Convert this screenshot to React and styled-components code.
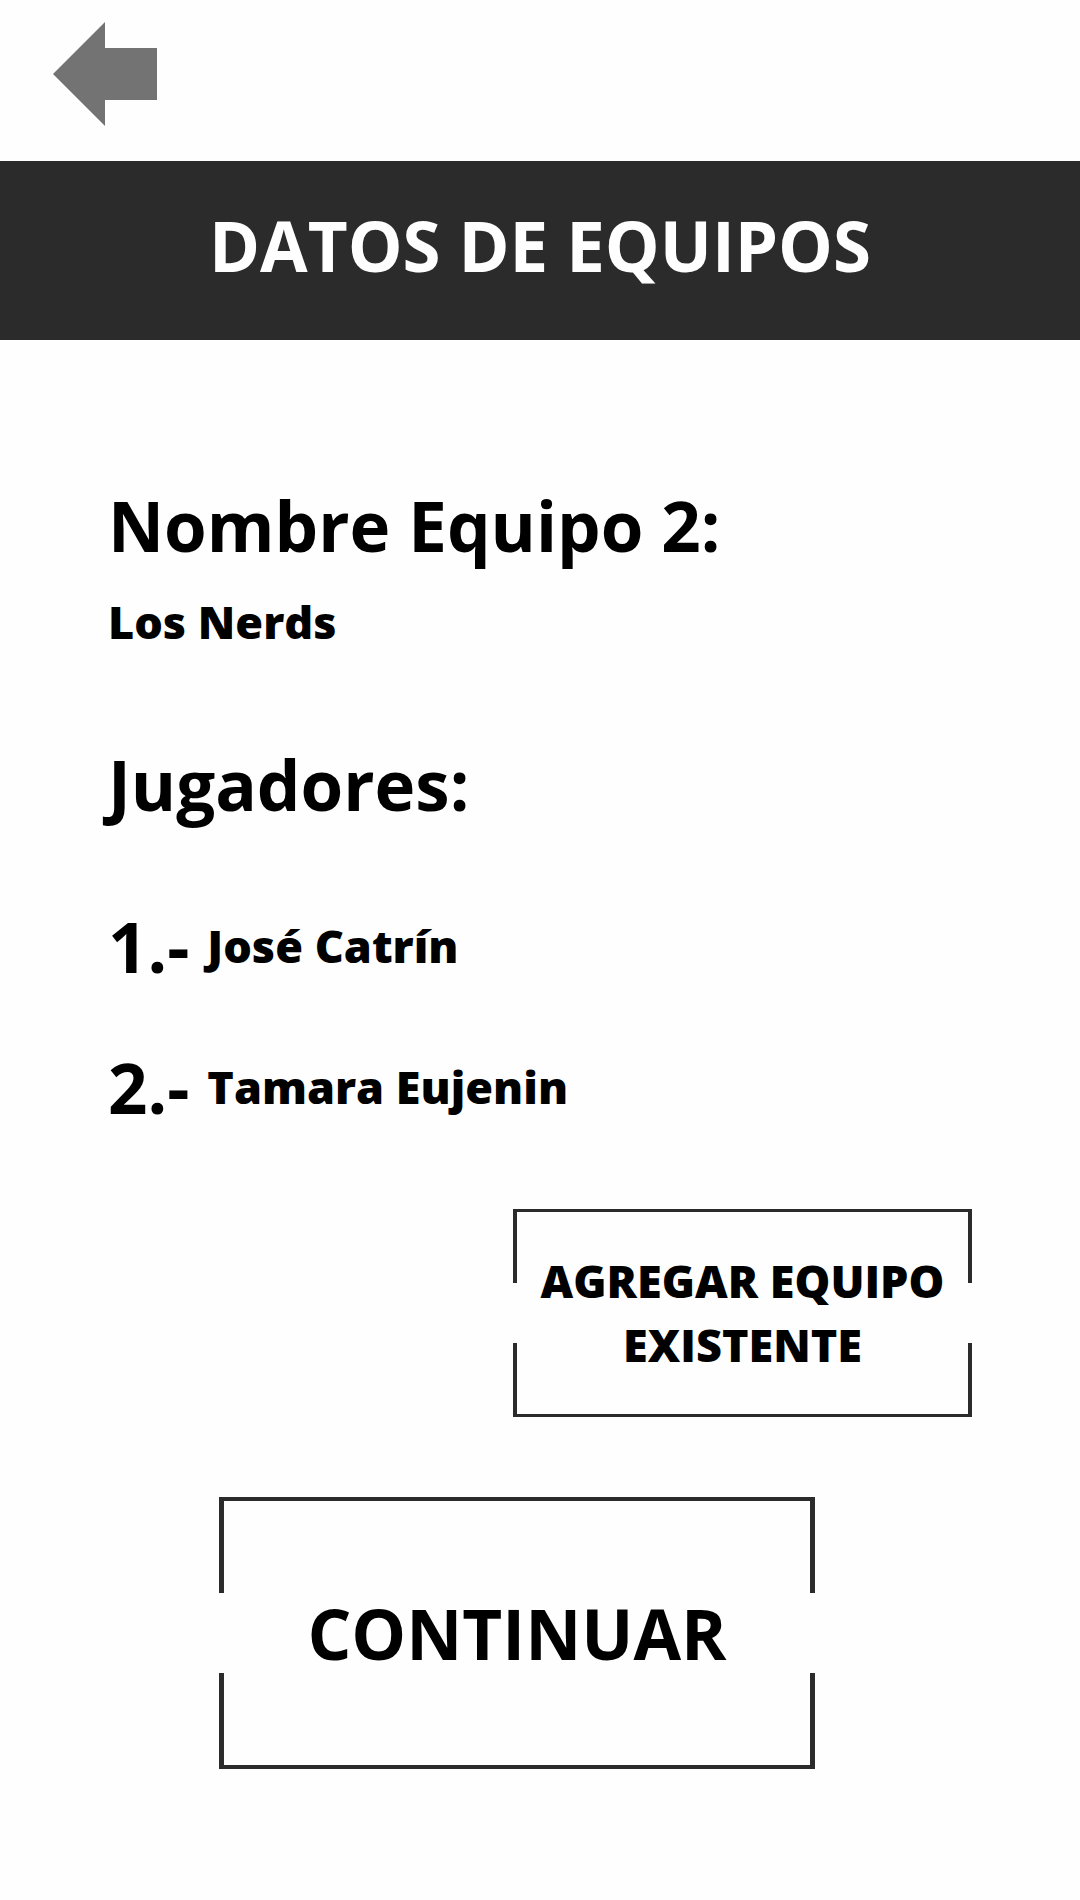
import React from "react";
import styled, { createGlobalStyle } from "styled-components";

const GlobalStyle = createGlobalStyle`
  *, *::before, *::after { box-sizing: border-box; }
  body {
    margin: 0;
    background: #fefefe;
    color: #000;
    font-family: "Open Sans", "Noto Sans", sans-serif;
  }
`;

const Page = styled.div`
  display: flex;
  flex-direction: column;
  min-height: 100vh;
`;

const TopBar = styled.nav`
  display: flex;
  padding: 22px 53px 35px;
`;

const BackButton = styled.button`
  display: block;
  padding: 0;
  border: 0;
  background: none;
  color: #737373;
  cursor: pointer;

  svg {
    display: block;
  }
`;

const Banner = styled.header`
  padding: 35px 32px 46px;
  background: #2b2b2b;
  color: #fefefe;
  text-align: center;
`;

const Title = styled.h1`
  margin: 0;
  font-size: 69px;
  line-height: 98px;
  font-weight: 700;
`;

const Content = styled.main`
  display: flex;
  flex-direction: column;
  padding: 136px 108px 64px;
`;

const Section = styled.section`
  margin-bottom: ${({ $gap }) => $gap}px;
`;

const Heading = styled.h2`
  margin: 0;
  font-size: 69px;
  line-height: 98px;
  font-weight: 700;
`;

const Value = styled.span`
  font-size: 45px;
  line-height: 64px;
  font-weight: 800;
`;

const TeamName = styled(Value).attrs({ as: "p" })`
  margin: 16px 0 0;
`;

const Players = styled.ol`
  display: flex;
  flex-direction: column;
  gap: 43px;
  margin: 64px 0 0;
  padding: 0;
  list-style: none;
`;

const Player = styled.li`
  display: flex;
  align-items: center;
  gap: 18px;
`;

const Position = styled.span`
  font-size: 69px;
  line-height: 98px;
  font-weight: 700;
`;

const BracketButton = styled.button`
  position: relative;
  border: 0;
  background: none;
  color: inherit;
  font-family: inherit;
  text-align: center;
  cursor: pointer;

  &::before,
  &::after {
    content: "";
    position: absolute;
    left: 0;
    right: 0;
    height: ${({ $arm }) => $arm}px;
    border: solid #2b2b2b;
  }

  &::before {
    top: 0;
    border-width: ${({ $line }) => `${$line}px ${$line + 1}px 0`};
  }

  &::after {
    bottom: 0;
    border-width: ${({ $line }) => `0 ${$line + 1}px ${$line}px`};
  }
`;

const AddTeamButton = styled(BracketButton)`
  align-self: flex-end;
  width: 459px;
  max-width: 100%;
  padding: 40px 16px;
  font-size: 45px;
  line-height: 64px;
  font-weight: 800;
`;

const ContinueButton = styled(BracketButton)`
  align-self: center;
  width: 596px;
  max-width: 100%;
  margin: 80px 46px 0 0;
  padding: 87px 16px;
  font-size: 69px;
  line-height: 98px;
  font-weight: 700;
`;

const players = ["José Catrín", "Tamara Eujenin"];

export default function App() {
  return (
    <Page>
      <GlobalStyle />
      <TopBar>
        <BackButton type="button" aria-label="Volver">
          <svg width="104" height="104" viewBox="0 0 104 104" fill="currentColor" aria-hidden="true">
            <path d="M0 52 52 0V26H104V78H52V104Z" />
          </svg>
        </BackButton>
      </TopBar>
      <Banner>
        <Title>DATOS DE EQUIPOS</Title>
      </Banner>
      <Content>
        <Section $gap={81}>
          <Heading>Nombre Equipo 2:</Heading>
          <TeamName>Los Nerds</TeamName>
        </Section>
        <Section $gap={73}>
          <Heading>Jugadores:</Heading>
          <Players>
            {players.map((name, index) => (
              <Player key={name}>
                <Position>{index + 1}.-</Position>
                <Value>{name}</Value>
              </Player>
            ))}
          </Players>
        </Section>
        <AddTeamButton type="button" $arm={74} $line={3}>
          AGREGAR EQUIPO EXISTENTE
        </AddTeamButton>
        <ContinueButton type="button" $arm={96} $line={4}>
          CONTINUAR
        </ContinueButton>
      </Content>
    </Page>
  );
}
